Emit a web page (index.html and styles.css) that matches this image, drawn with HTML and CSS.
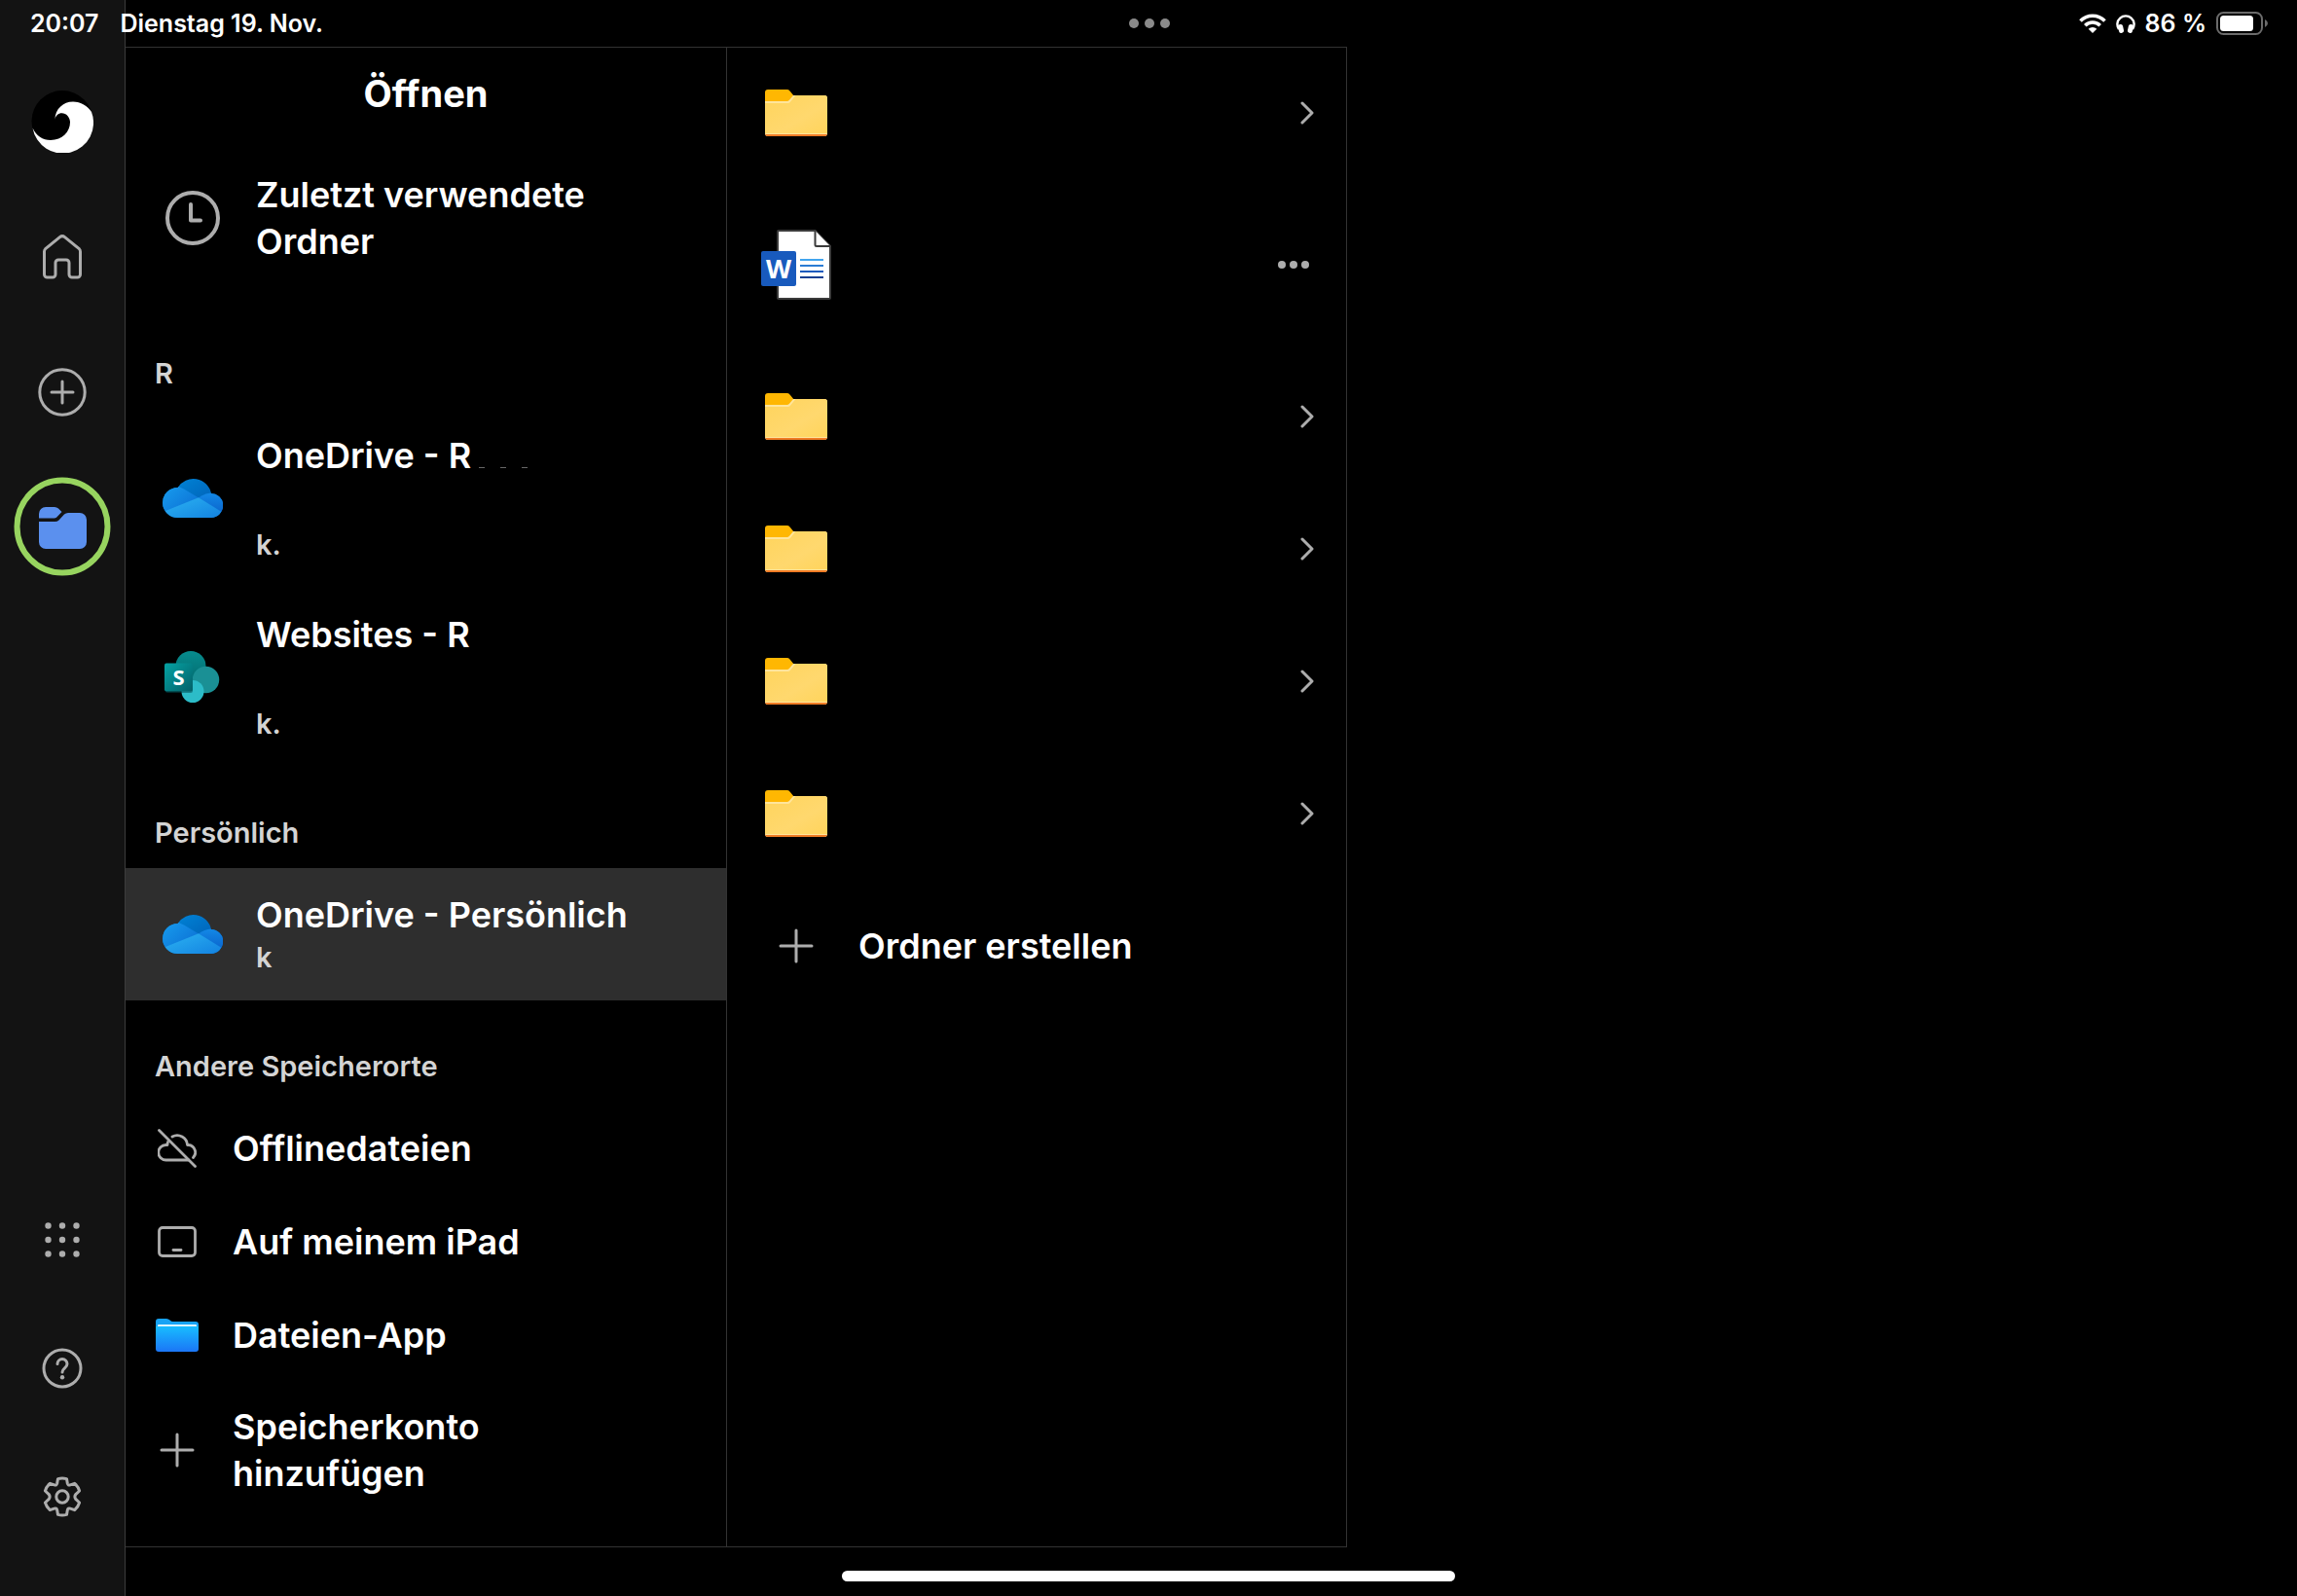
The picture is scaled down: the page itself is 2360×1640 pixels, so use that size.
FILE: index.html
```html
<!DOCTYPE html>
<html lang="de">
<head>
    <meta charset="UTF-8">
    <meta name="viewport" content="width=device-width, initial-scale=1.0">
    <title>Öffnen</title>
    <link rel="stylesheet" href="styles.css">
</head>
<body>
    <!-- Shared icons -->
    <svg class="sprite" aria-hidden="true">
        <defs>
            <linearGradient id="folderFill" x1="0" y1="0" x2="1" y2="1">
                <stop offset="0" stop-color="#ffd45c"/>
                <stop offset="0.6" stop-color="#ffd86e"/>
                <stop offset="1" stop-color="#ffd45c"/>
            </linearGradient>
            <linearGradient id="cloudBack" x1="0" y1="0" x2="1" y2="1">
                <stop offset="0" stop-color="#0089dc"/>
                <stop offset="1" stop-color="#0052a8"/>
            </linearGradient>
            <linearGradient id="cloudLeft" x1="0" y1="0" x2="1" y2="1">
                <stop offset="0" stop-color="#18a0f0"/>
                <stop offset="1" stop-color="#0a68d0"/>
            </linearGradient>
            <linearGradient id="cloudRight" x1="0" y1="0" x2="0" y2="1">
                <stop offset="0" stop-color="#1388e6"/>
                <stop offset="1" stop-color="#0a64cc"/>
            </linearGradient>
            <linearGradient id="cloudFront" x1="0" y1="0" x2="1" y2="1">
                <stop offset="0" stop-color="#2cb4f2"/>
                <stop offset="1" stop-color="#1280e0"/>
            </linearGradient>
            <clipPath id="cloudClip">
                <path d="M15.500 40A15.500 15.500 0 1 1 15.600 9A18.800 18.800 0 0 1 50 15A12.500 12.500 0 0 1 49.500 40Z"/>
            </clipPath>
            <symbol id="folder" viewBox="0 0 64 48">
                <path d="M0 3a3 3 0 0 1 3-3h19.500a4 4 0 0 1 3 1.400L30 7v9H0z" fill="#ffb702"/>
                <path d="M0 12h22.500a3 3 0 0 0 2.300-1.100L29 6h32a3 3 0 0 1 3 3v36a3 3 0 0 1-3 3H3a3 3 0 0 1-3-3z" fill="#ffe59b"/>
                <path d="M0 14h23.500a3 3 0 0 0 2.300-1.100L31.500 6H61a3 3 0 0 1 3 3v36H0z" fill="url(#folderFill)"/>
                <path d="M0 46h64a3 3 0 0 1-3 2H3a3 3 0 0 1-3-2z" fill="#f07b24"/>
            </symbol>
            <symbol id="chevron" viewBox="0 0 24 24">
                <path d="M7 2L17 12L7 22" fill="none" stroke="#adadad" stroke-width="3" stroke-linecap="round" stroke-linejoin="round"/>
            </symbol>
            <symbol id="plus" viewBox="0 0 36 36">
                <path d="M18 2V34M2 18H34" fill="none" stroke="#adadad" stroke-width="3" stroke-linecap="round"/>
            </symbol>
            <symbol id="onedrive" viewBox="0 0 62 40">
                <g clip-path="url(#cloudClip)">
                    <rect width="62" height="40" fill="url(#cloudBack)"/>
                    <path d="M-2 5H8Q16 7 22 10.500L37 19.500L4 34L-2 40Z" fill="url(#cloudLeft)"/>
                    <path d="M37 19.500Q43 15 50 14.500H64V36L58 33Z" fill="url(#cloudRight)"/>
                    <path d="M3 33L37 19.200L60 33.500V42H0Z" fill="url(#cloudFront)"/>
                </g>
            </symbol>
        </defs>
    </svg>

    <div class="screen">
        <nav class="sidebar">
            <div class="sidebar-group">
                <button type="button" class="nav-btn" aria-label="Konto">
                    <svg width="64" height="64" viewBox="0 0 64 64">
                        <circle cx="32" cy="31.500" r="31.500" fill="#000"/>
                        <path d="M24.500 30C24.500 19 33 11.500 43 11.500C51 11.500 58 16 62 22A31.500 31.500 0 1 1 1.500 38.500C5 46.500 12 51 20 51C32 51 40 42.500 40 32.500C40 27.500 36 23.200 31.500 23.200C28 23.200 25 25.500 24.500 30Z" fill="#fff"/>
                    </svg>
                </button>
                <button type="button" class="nav-btn" aria-label="Start">
                    <svg class="line-icon" width="42" height="46" viewBox="0 0 42 46">
                        <path d="M18.500 2.600a4 4 0 0 1 5 0L38 14.400a4 4 0 0 1 1.500 3.100V41a3 3 0 0 1-3 3H31a3 3 0 0 1-3-3V29a3 3 0 0 0-3-3H17a3 3 0 0 0-3 3V41a3 3 0 0 1-3 3H5.500a3 3 0 0 1-3-3V17.500a4 4 0 0 1 1.500-3.100z"/>
                    </svg>
                </button>
                <button type="button" class="nav-btn" aria-label="Neu">
                    <svg class="line-icon" width="50" height="50" viewBox="0 0 50 50">
                        <circle cx="25" cy="25" r="23.200"/>
                        <path d="M25 14V36M14 25H36"/>
                    </svg>
                </button>
                <button type="button" class="nav-btn" aria-label="Öffnen" aria-current="page">
                    <svg width="102" height="104" viewBox="0 0 102 104">
                        <ellipse cx="51" cy="51" rx="46.500" ry="47.500" fill="none" stroke="#97d45f" stroke-width="6"/>
                        <path d="M27 38a7 7 0 0 1 7-7H43a6 6 0 0 1 4 1.600L50.500 36L45 41.800a4 4 0 0 1-2.500.700H27Z" fill="#5b90ee"/>
                        <path d="M27 46H43.500a6 6 0 0 0 4-1.600L53 38.600A6 6 0 0 1 57 37H69a7 7 0 0 1 7 7V67a7 7 0 0 1-7 7H34a7 7 0 0 1-7-7Z" fill="#5b90ee"/>
                    </svg>
                </button>
            </div>
            <div class="sidebar-group sidebar-group-bottom">
                <button type="button" class="nav-btn" aria-label="Apps">
                    <svg width="36" height="36" viewBox="0 0 36 36" fill="#adadad">
                        <circle cx="3.500" cy="3.500" r="3.200"/><circle cx="18" cy="3.500" r="3.200"/><circle cx="32.500" cy="3.500" r="3.200"/>
                        <circle cx="3.500" cy="18" r="3.200"/><circle cx="18" cy="18" r="3.200"/><circle cx="32.500" cy="18" r="3.200"/>
                        <circle cx="3.500" cy="32.500" r="3.200"/><circle cx="18" cy="32.500" r="3.200"/><circle cx="32.500" cy="32.500" r="3.200"/>
                    </svg>
                </button>
                <button type="button" class="nav-btn" aria-label="Hilfe">
                    <svg class="line-icon" width="42" height="42" viewBox="0 0 42 42">
                        <circle cx="21" cy="21" r="19"/>
                        <path d="M16 16.500a5 5 0 0 1 10 0c0 4.300-5 4.500-5 8.500"/>
                        <circle class="dot" cx="21" cy="30.300" r="2.200"/>
                    </svg>
                </button>
                <button type="button" class="nav-btn" aria-label="Einstellungen">
                    <svg class="line-icon" width="42" height="42" viewBox="0 0 42 42">
                        <path d="M16.500 2.600Q21 1.500 25.500 2.600L26.300 7.300Q26.800 9.600 29.200 8.900L33.700 7.300Q37.300 10.500 38.600 15L35 18.300Q32.800 21 35 23.700L38.600 27Q37.300 31.500 33.700 34.700L29.200 33.100Q26.800 32.400 26.300 34.700L25.500 39.400Q21 40.500 16.500 39.400L15.700 34.700Q15.200 32.400 12.800 33.100L8.300 34.700Q4.700 31.500 3.400 27L7 23.700Q9.200 21 7 18.300L3.400 15Q4.700 10.500 8.300 7.300L12.800 8.900Q15.200 9.600 15.700 7.300Z"/>
                        <circle cx="21" cy="21" r="6.200"/>
                    </svg>
                </button>
            </div>
        </nav>

        <header class="status-bar">
            <div class="status-left">
                <span>20:07</span>
                <span>Dienstag 19. Nov.</span>
            </div>
            <div class="multitask"><i></i><i></i><i></i></div>
            <div class="status-right">
                <svg width="28" height="20" viewBox="0 0 28 20" fill="none" stroke="#fff" stroke-width="3.600">
                    <path d="M1.500 7.500A17.500 17.500 0 0 1 26.500 7.500"/>
                    <path d="M6.300 12.300A10.800 10.800 0 0 1 21.700 12.300"/>
                    <path d="M14 20L9.700 15.700A6.200 6.200 0 0 1 18.300 15.700Z" fill="#fff" stroke="none"/>
                </svg>
                <svg width="20" height="20" viewBox="0 0 20 20">
                    <path d="M3 16A8.600 8.600 0 1 1 17 16" fill="none" stroke="#fff" stroke-width="2.400"/>
                    <rect x="2.600" y="11" width="5" height="9" rx="2.300" fill="#fff" transform="rotate(-12 5 15.500)"/>
                    <rect x="12.400" y="11" width="5" height="9" rx="2.300" fill="#fff" transform="rotate(12 15 15.500)"/>
                </svg>
                <span>86 %</span>
                <svg width="53" height="24" viewBox="0 0 53 24">
                    <rect x="1" y="1" width="46" height="22" rx="6.500" fill="none" stroke="#6b6b6b" stroke-width="2"/>
                    <rect x="4" y="4" width="34" height="16" rx="3.500" fill="#fff"/>
                    <path d="M50 8Q53 9.500 53 12Q53 14.500 50 16Z" fill="#6b6b6b"/>
                </svg>
            </div>
        </header>

        <main class="content">
            <section class="pane places">
                <h1 class="pane-title">Öffnen</h1>
                <button type="button" class="row row-recent">
                    <span class="row-icon">
                        <svg width="56" height="56" viewBox="0 0 56 56" fill="none" stroke="#adadad" stroke-width="4" stroke-linecap="round" stroke-linejoin="round">
                            <circle cx="28" cy="28" r="26"/>
                            <path d="M26 14V30.500H36"/>
                        </svg>
                    </span>
                    <span class="row-title">Zuletzt verwendete Ordner</span>
                </button>

                <h2 class="group-title">R</h2>
                <button type="button" class="row">
                    <span class="row-icon"><svg width="62" height="40"><use href="#onedrive"/></svg></span>
                    <span class="row-text">
                        <span class="row-title two-lines">OneDrive - R<span class="trace"><i></i><i></i><i></i></span></span>
                        <span class="row-sub">k.</span>
                    </span>
                </button>
                <button type="button" class="row">
                    <span class="row-icon">
                        <svg width="60" height="54" viewBox="0 0 60 54">
                            <defs>
                                <linearGradient id="spBox" x1="0" y1="0" x2="1" y2="1">
                                    <stop offset="0" stop-color="#05a3a4"/>
                                    <stop offset="1" stop-color="#036068"/>
                                </linearGradient>
                                <linearGradient id="spTop" x1="0" y1="0" x2="0" y2="1">
                                    <stop offset="0" stop-color="#078c8e"/>
                                    <stop offset="1" stop-color="#036c70"/>
                                </linearGradient>
                            </defs>
                            <circle cx="28" cy="15.500" r="15.500" fill="url(#spTop)"/>
                            <circle cx="43.500" cy="29.500" r="13.700" fill="#1a9095"/>
                            <circle cx="30" cy="41.500" r="11.500" fill="#2cbcc8"/>
                            <rect x="2" y="14" width="28" height="29" rx="2" fill="#024a50" opacity="0.500"/>
                            <rect x="1" y="12.500" width="29" height="29" rx="2" fill="url(#spBox)"/>
                            <text class="sp-letter" x="15.500" y="35" text-anchor="middle">S</text>
                        </svg>
                    </span>
                    <span class="row-text">
                        <span class="row-title two-lines">Websites - R</span>
                        <span class="row-sub">k.</span>
                    </span>
                </button>

                <h2 class="group-title">Persönlich</h2>
                <button type="button" class="row selected">
                    <span class="row-icon"><svg width="62" height="40"><use href="#onedrive"/></svg></span>
                    <span class="row-text">
                        <span class="row-title">OneDrive - Persönlich</span>
                        <span class="row-sub">k</span>
                    </span>
                </button>

                <h2 class="group-title">Andere Speicherorte</h2>
                <button type="button" class="row compact">
                    <span class="row-icon">
                        <svg width="40" height="40" viewBox="0 0 40 40" fill="none" stroke="#adadad" stroke-width="2.800" stroke-linecap="round" stroke-linejoin="round">
                            <path d="M1.500 1.500L38.500 38.500"/>
                            <path d="M10.500 13.500Q10 15 10 16.500H8.500A7.700 7.700 0 0 0 8.500 32H31.500"/>
                            <path d="M15 8A10.500 10.500 0 0 1 30.500 16.500H31.500A7.700 7.700 0 0 1 36.500 29.500"/>
                        </svg>
                    </span>
                    <span class="row-title">Offlinedateien</span>
                </button>
                <button type="button" class="row compact">
                    <span class="row-icon">
                        <svg width="40" height="32" viewBox="0 0 40 32" fill="none" stroke="#adadad" stroke-width="2.800" stroke-linecap="round">
                            <rect x="1.500" y="1.500" width="37" height="29" rx="3.500"/>
                            <path d="M16 24.500H24"/>
                        </svg>
                    </span>
                    <span class="row-title">Auf meinem iPad</span>
                </button>
                <button type="button" class="row compact">
                    <span class="row-icon">
                        <svg width="44" height="34" viewBox="0 0 44 34">
                            <defs>
                                <linearGradient id="filesFill" x1="0" y1="0" x2="0" y2="1">
                                    <stop offset="0" stop-color="#18bcff"/>
                                    <stop offset="1" stop-color="#1b76f6"/>
                                </linearGradient>
                            </defs>
                            <path d="M0 3a3 3 0 0 1 3-3h8q2 0 3.500 1.500T18 3H41a3 3 0 0 1 3 3V10H0Z" fill="#17a3f5"/>
                            <rect x="2" y="6" width="40" height="4" rx="1" fill="#d9f4ff"/>
                            <path d="M0 8H44V31a3 3 0 0 1-3 3H3a3 3 0 0 1-3-3Z" fill="url(#filesFill)"/>
                        </svg>
                    </span>
                    <span class="row-title">Dateien-App</span>
                </button>
                <button type="button" class="row compact row-add">
                    <span class="row-icon"><svg width="36" height="36"><use href="#plus"/></svg></span>
                    <span class="row-title">Speicherkonto hinzufügen</span>
                </button>
            </section>

            <section class="pane files">
                <button type="button" class="file-row" aria-label="Ordner">
                    <span class="file-icon"><svg width="64" height="48"><use href="#folder"/></svg></span>
                    <svg class="chevron" width="24" height="24"><use href="#chevron"/></svg>
                </button>
                <div class="file-row file-row-doc">
                    <span class="file-icon">
                        <svg width="72" height="72" viewBox="0 0 72 72">
                            <path d="M17 2a1 1 0 0 1 1-1H55.500L71 17V70a1 1 0 0 1-1 1H18a1 1 0 0 1-1-1Z" fill="#fff" stroke="#3b3b3b" stroke-width="2"/>
                            <path d="M55.500 1V15.500a1.500 1.500 0 0 0 1.500 1.500H71" fill="#fff" stroke="#3b3b3b" stroke-width="2"/>
                            <path d="M40 31H64" stroke="#41a5ee" stroke-width="2"/>
                            <path d="M40 37H64" stroke="#2b7cd3" stroke-width="2"/>
                            <path d="M40 43H64" stroke="#185abd" stroke-width="2"/>
                            <path d="M40 49H64" stroke="#103f91" stroke-width="2"/>
                            <rect x="0" y="22" width="36" height="36" rx="2" fill="#185abd"/>
                            <text class="word-letter" x="18" y="50" text-anchor="middle">W</text>
                        </svg>
                    </span>
                    <button type="button" class="more-btn" aria-label="Mehr"><i></i><i></i><i></i></button>
                </div>
                <button type="button" class="file-row" aria-label="Ordner">
                    <span class="file-icon"><svg width="64" height="48"><use href="#folder"/></svg></span>
                    <svg class="chevron" width="24" height="24"><use href="#chevron"/></svg>
                </button>
                <button type="button" class="file-row" aria-label="Ordner">
                    <span class="file-icon"><svg width="64" height="48"><use href="#folder"/></svg></span>
                    <svg class="chevron" width="24" height="24"><use href="#chevron"/></svg>
                </button>
                <button type="button" class="file-row" aria-label="Ordner">
                    <span class="file-icon"><svg width="64" height="48"><use href="#folder"/></svg></span>
                    <svg class="chevron" width="24" height="24"><use href="#chevron"/></svg>
                </button>
                <button type="button" class="file-row" aria-label="Ordner">
                    <span class="file-icon"><svg width="64" height="48"><use href="#folder"/></svg></span>
                    <svg class="chevron" width="24" height="24"><use href="#chevron"/></svg>
                </button>
                <button type="button" class="file-row">
                    <span class="file-icon"><svg width="36" height="36"><use href="#plus"/></svg></span>
                    <span class="row-title">Ordner erstellen</span>
                </button>
            </section>
        </main>

        <div class="home-area"><div class="home-bar"></div></div>
    </div>
</body>
</html>
```
FILE: styles.css
```css
/* General Styles */
* {
    box-sizing: border-box;
}

body {
    margin: 0;
    background: #000;
    color: #fff;
    font-family: Inter, "Liberation Sans", sans-serif;
}

button {
    margin: 0;
    padding: 0;
    border: none;
    background: none;
    color: inherit;
    font: inherit;
    text-align: left;
    cursor: pointer;
}

svg {
    display: block;
    flex-shrink: 0;
}

.sprite {
    position: absolute;
    width: 0;
    height: 0;
}

.screen {
    display: grid;
    grid-template-columns: 129px 1fr;
    grid-template-rows: 48px 1fr 50px;
    min-height: 100vh;
}

/* Sidebar */
.sidebar {
    grid-column: 1;
    grid-row: 1 / -1;
    display: flex;
    flex-direction: column;
    justify-content: space-between;
    padding: 55px 0 36px;
    background: #131313;
    border-right: 1px solid #3c3c3c;
}

.sidebar-group {
    display: flex;
    flex-direction: column;
}

.nav-btn {
    display: flex;
    align-items: center;
    justify-content: center;
    height: 139px;
}

.sidebar-group-bottom .nav-btn {
    height: 132px;
}

.line-icon {
    fill: none;
    stroke: #adadad;
    stroke-width: 3;
    stroke-linecap: round;
    stroke-linejoin: round;
}

.line-icon .dot {
    fill: #adadad;
    stroke: none;
}

/* Status bar, runs across the sidebar too */
.status-bar {
    grid-column: 1 / -1;
    grid-row: 1;
    display: grid;
    grid-template-columns: 1fr auto 1fr;
    align-items: center;
    padding: 0 30px 0 31px;
    font-size: 25px;
    font-weight: 600;
    line-height: 32px;
}

.status-left {
    display: flex;
    gap: 22px;
}

.multitask {
    display: flex;
    gap: 6px;
}

.multitask i {
    width: 10px;
    height: 10px;
    border-radius: 50%;
    background: #8a8a8a;
}

.status-right {
    display: flex;
    align-items: center;
    justify-content: flex-end;
    gap: 10px;
}

/* Panes, hairlines are inset shadows so they take no room */
.content {
    grid-column: 2;
    grid-row: 2;
    display: grid;
    grid-template-columns: 618fr 637fr 976fr;
}

.pane {
    padding-right: 1px;
    box-shadow: inset -1px 1px #333, inset 0 -1px #333;
}

.pane-title {
    margin: 0;
    padding: 24px 0 32px;
    font-size: 38px;
    font-weight: 700;
    line-height: 48px;
    text-align: center;
}

.row {
    display: flex;
    align-items: center;
    width: 100%;
    padding: 24px 60px 24px 36px;
}

.row-recent {
    margin-bottom: 20px;
}

.row-icon {
    display: flex;
    justify-content: center;
    flex-shrink: 0;
    width: 66px;
    margin-right: 32px;
}

.row-text {
    display: flex;
    flex-direction: column;
}

.row-title {
    font-size: 36px;
    font-weight: 600;
    line-height: 48px;
}

.two-lines {
    min-height: 96px;
}

/* Faint marks left after a hidden name */
.trace {
    display: inline-flex;
    gap: 16px;
    margin-left: 8px;
}

.trace i {
    width: 6px;
    height: 1px;
    background: #666;
}

.row-sub {
    color: #d4d4d4;
    font-size: 29px;
    font-weight: 600;
    line-height: 40px;
}

.selected {
    background: #2e2e2e;
}

.group-title {
    margin: 0;
    padding: 48px 30px 16px;
    color: #d4d4d4;
    font-size: 29px;
    font-weight: 600;
    line-height: 40px;
}

.compact {
    padding-left: 31px;
}

.compact .row-icon {
    width: 44px;
    margin-right: 35px;
}

.row-add {
    padding-top: 22px;
    padding-bottom: 22px;
}

/* File list */
.file-row {
    display: flex;
    align-items: center;
    width: 100%;
    height: 136px;
    padding: 0 28px 0 35px;
}

.file-row-doc {
    height: 176px;
    padding-right: 34px;
}

.file-icon {
    display: flex;
    justify-content: center;
    width: 72px;
    margin-right: 28px;
}

.chevron,
.more-btn {
    margin-left: auto;
}

.more-btn {
    display: flex;
    gap: 4px;
    padding: 8px 4px;
}

.more-btn i {
    width: 8px;
    height: 8px;
    border-radius: 50%;
    background: #adadad;
}

.sp-letter {
    fill: #fff;
    font-family: "Open Sans", sans-serif;
    font-size: 22px;
    font-weight: 700;
}

.word-letter {
    fill: #fff;
    font-family: "Open Sans", sans-serif;
    font-size: 27px;
    font-weight: 700;
}

/* Home indicator */
.home-area {
    grid-column: 1 / -1;
    grid-row: 3;
    display: flex;
    justify-content: center;
    align-items: flex-end;
    padding-bottom: 15px;
}

.home-bar {
    width: 630px;
    height: 11px;
    border-radius: 6px;
    background: #fff;
}
```
